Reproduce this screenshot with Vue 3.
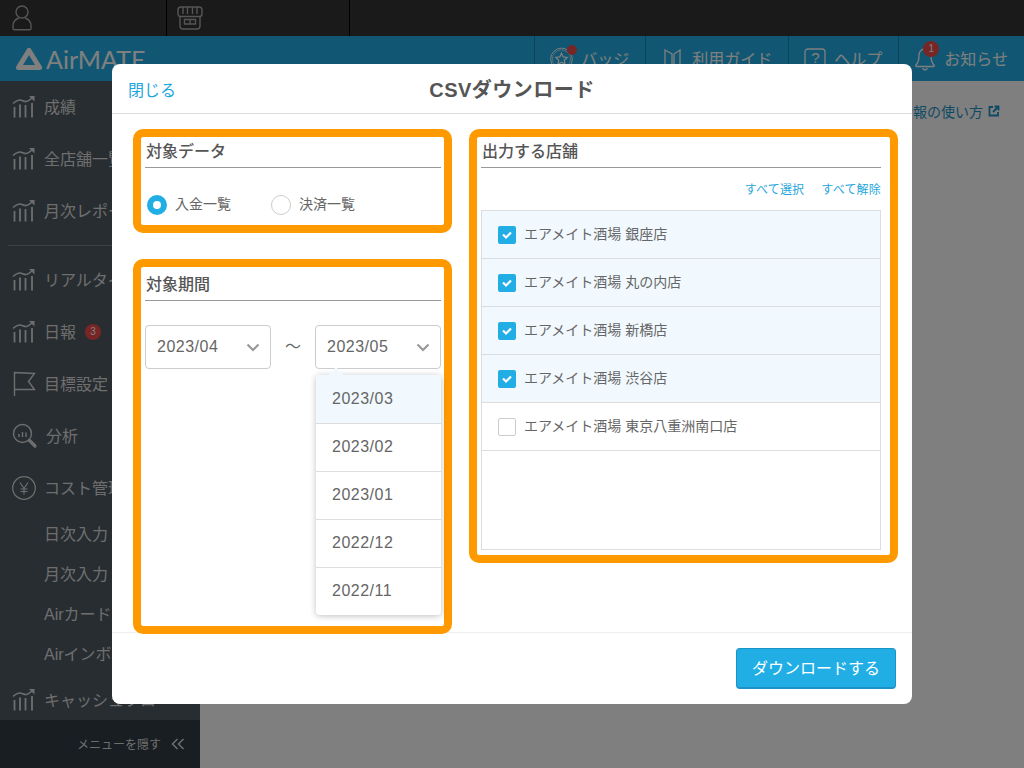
<script setup>
const navItems = [
  { label: '成績', icon: 'chart' },
  { label: '全店舗一覧', icon: 'chart' },
  { label: '月次レポート', icon: 'chart', divider: true },
  { label: 'リアルタイム', icon: 'chart' },
  { label: '日報', icon: 'chart', badge: 3 },
  { label: '目標設定', icon: 'flag' },
  { label: '分析', icon: 'search' },
  { label: 'コスト管理', icon: 'yen', children: ['日次入力', '月次入力', 'Airカード', 'Airインボイス'] },
  { label: 'キャッシュフロー', icon: 'chart' },
]

const months = ['2023/03', '2023/02', '2023/01', '2022/12', '2022/11']

const stores = [
  { name: 'エアメイト酒場 銀座店', checked: true },
  { name: 'エアメイト酒場 丸の内店', checked: true },
  { name: 'エアメイト酒場 新橋店', checked: true },
  { name: 'エアメイト酒場 渋谷店', checked: true },
  { name: 'エアメイト酒場 東京八重洲南口店', checked: false },
]
</script>

<template>
  <div class="page">
    <div class="topbar">
      <div class="top-cell first">
        <svg width="20" height="26" viewBox="0 0 20 26" fill="none" stroke="#aaa" stroke-width="1.400">
          <circle cx="10" cy="7" r="6" />
          <path d="M7 13c-3 1-6 4-6 8v2.500c0 .8.6 1.300 1.300 1.300h15.400c.7 0 1.300-.5 1.300-1.300V21c0-4-3-7-6-8" />
        </svg>
      </div>
      <div class="top-cell second">
        <svg width="26" height="24" viewBox="0 0 26 24" fill="none" stroke="#aaa" stroke-width="1.400">
          <path d="M4 1h18c2 0 3 1.500 3 3v4c0 1.600-1 2.500-2.400 2.500H3.400C2 10.500 1 9.600 1 8V4c0-1.500 1-3 3-3z" />
          <path d="M6 1v7M10.500 1v7M15.500 1v7M20 1v7" />
          <path d="M3 10.500V20c0 1.600 1 3 3 3h14c2 0 3-1.400 3-3v-9.500" />
          <path d="M7.500 13.500h11v4.500h-11zM13 13.500V18" />
        </svg>
      </div>
    </div>

    <header class="header">
      <div class="logo">
        <svg width="28" height="26" viewBox="0 0 28 26" fill="none" stroke="#fff" stroke-width="5" stroke-linejoin="round">
          <path d="M14 4.500L24.500 21.500H3.500z" />
        </svg>
        <span>AirMATE</span>
      </div>
      <nav class="header-nav">
        <a class="header-item">
          <span class="header-icon">
            <svg width="24" height="24" viewBox="0 0 24 24" fill="none" stroke="#fff" stroke-width="1">
              <circle cx="12" cy="12" r="11.300" />
              <circle cx="12" cy="12" r="9.500" stroke-width=".6" />
              <path d="M12 6l1.800 3.900 4.200.5-3.100 2.900.8 4.200-3.700-2.100-3.700 2.100.8-4.200L6 10.400l4.200-.5z" stroke-width="1.300" />
            </svg>
            <i class="dot" />
          </span>
          <span class="header-text">バッジ</span>
        </a>
        <a class="header-item">
          <span class="header-icon">
            <svg width="23" height="22" viewBox="0 0 23 22" fill="none" stroke="#fff" stroke-width="1.300">
              <path d="M4 2l7 4v15l-7-3.500zM19 2l-6 4v15l6-3.500z" />
            </svg>
          </span>
          <span class="header-text">利用ガイド</span>
        </a>
        <a class="header-item">
          <span class="header-icon">
            <svg width="22" height="22" viewBox="0 0 22 22" fill="none" stroke="#fff" stroke-width="1.300">
              <rect x="1" y="1" width="20" height="18" rx="3" />
            </svg>
            <b class="help-mark">?</b>
          </span>
          <span class="header-text">ヘルプ</span>
        </a>
        <a class="header-item">
          <span class="header-icon">
            <svg width="22" height="24" viewBox="0 0 22 24" fill="none" stroke="#fff" stroke-width="1.300">
              <path d="M11 2c-4 0-6 3-6 6.500 0 5-1 7.500-3 9.500-.6.700-.2 1.500.6 1.500h16.800c.8 0 1.200-.8.600-1.500-2-2-3-4.500-3-9.500C17 5 15 2 11 2z" />
              <path d="M8.500 21c.6 1.300 1.500 2 2.500 2s1.900-.7 2.500-2" />
            </svg>
            <i class="count">1</i>
          </span>
          <span class="header-text">お知らせ</span>
        </a>
      </nav>
    </header>

    <div class="content">
      <aside class="sidebar">
        <template v-for="item in navItems" :key="item.label">
          <a class="nav-item">
            <svg v-if="item.icon === 'chart'" width="24" height="24" viewBox="0 0 24 24" fill="none" stroke="#ddd" stroke-width="1.500">
              <path d="M2.500 12v10.500M8 9.500v13M13.500 10v12.500M20 8v14.500" stroke-width="1.800" />
              <path d="M1 8.500C4 6 6 5 8 5s4 2 6.500 1.500S18 4.500 21 2" />
              <path d="M17 1h5.500v5.500z" fill="#ddd" stroke="none" />
            </svg>
            <svg v-else-if="item.icon === 'flag'" width="24" height="26" viewBox="0 0 24 26" fill="none" stroke="#ddd" stroke-width="1.400">
              <path d="M2.500 25V1.500l20 1-6 8 6 8H2.500" />
            </svg>
            <svg v-else-if="item.icon === 'search'" width="26" height="26" viewBox="0 0 26 26" fill="none" stroke="#ddd" stroke-width="1.400">
              <circle cx="10.500" cy="10.500" r="9" />
              <path d="M7 14v-3M10.500 14V9M14 14v-4.500" />
              <path d="M17.500 17.500l5.500 5.500" stroke-width="3.200" stroke-linecap="round" />
            </svg>
            <svg v-else width="24" height="24" viewBox="0 0 24 24" fill="none" stroke="#ddd" stroke-width="1.200">
              <circle cx="12" cy="12" r="11.300" />
              <path d="M8 6.500l4 6 4-6M12 12.500v6M8.500 13h7M8.500 15.500h7" />
            </svg>
            <span class="nav-text">{{ item.label }}</span>
            <i v-if="item.badge" class="nav-badge">{{ item.badge }}</i>
          </a>
          <hr v-if="item.divider" class="nav-divider">
          <div v-if="item.children" class="sub-nav">
            <a v-for="child in item.children" :key="child" class="sub-item">{{ child }}</a>
          </div>
        </template>
        <div class="hide-menu">
          <span>メニューを隠す</span>
          <svg width="14" height="12" viewBox="0 0 14 12" fill="none" stroke="#ddd" stroke-width="1.500">
            <path d="M6.500 1L1.500 6l5 5M12.500 1l-5 5 5 5" />
          </svg>
        </div>
      </aside>
      <main class="main">
        <a class="help-link">
          成績情報の使い方
          <svg width="12" height="12" viewBox="0 0 12 12" fill="none" stroke="#1d94c8" stroke-width="1.800">
            <path d="M5 2H1.500v8.500H10V7M6.500 1.500h4v4M10.500 1.500L5 7" />
          </svg>
        </a>
      </main>
    </div>

    <div class="overlay">
      <div class="modal">
        <div class="modal-head">
          <a class="close">閉じる</a>
          <h1>CSVダウンロード</h1>
        </div>

        <div class="modal-body">
          <div class="left-col">
            <section class="mark mark-data">
              <h2>対象データ</h2>
              <div class="radios">
                <label class="radio">
                  <i class="radio-dot on" />
                  <span>入金一覧</span>
                </label>
                <label class="radio">
                  <i class="radio-dot" />
                  <span>決済一覧</span>
                </label>
              </div>
            </section>

            <section class="mark mark-period">
              <h2>対象期間</h2>
              <div class="period">
                <div class="select">
                  2023/04
                  <svg class="chevron" width="14" height="9" viewBox="0 0 14 9" fill="none" stroke="#999" stroke-width="2.200">
                    <path d="M1.500 1.500L7 7l5.500-5.500" />
                  </svg>
                </div>
                <span class="tilde">〜</span>
                <div class="select">
                  2023/05
                  <svg class="chevron" width="14" height="9" viewBox="0 0 14 9" fill="none" stroke="#999" stroke-width="2.200">
                    <path d="M1.500 1.500L7 7l5.500-5.500" />
                  </svg>
                  <div class="menu">
                    <i class="menu-arrow" />
                    <div v-for="month in months" :key="month" class="menu-item">
                      {{ month }}
                    </div>
                  </div>
                </div>
              </div>
            </section>
          </div>

          <section class="mark mark-stores">
            <h2>出力する店舗</h2>
            <div class="bulk">
              <a>すべて選択</a>
              <a>すべて解除</a>
            </div>
            <ul class="store-list">
              <li v-for="store in stores" :key="store.name" :class="{ checked: store.checked }">
                <i class="box">
                  <svg v-if="store.checked" width="12" height="10" viewBox="0 0 12 10" fill="none" stroke="#fff" stroke-width="2.200">
                    <path d="M2 4.500l3 3 5-5" />
                  </svg>
                </i>
                <span class="store-name">{{ store.name }}</span>
              </li>
            </ul>
          </section>
        </div>

        <div class="modal-foot">
          <button type="button">ダウンロードする</button>
        </div>
      </div>
    </div>
  </div>
</template>

<style>
html, body { margin: 0; }
</style>

<style scoped>
.page {
  position: relative;
  display: flex;
  flex-direction: column;
  width: 1024px;
  height: 768px;
  overflow: hidden;
  font-family: "Liberation Sans", "Noto Sans CJK JP", sans-serif;
  color: #666;
}

.topbar {
  flex: 0 0 36px;
  display: flex;
  background: #343434;
}
.top-cell {
  display: flex;
  align-items: center;
  border-right: 1px solid #000;
  box-sizing: border-box;
}
.top-cell.first { width: 167px; padding-left: 12px; }
.top-cell.second { width: 183px; padding-left: 10px; }

.header {
  flex: 0 0 45px;
  display: flex;
  justify-content: space-between;
  background: #23afe6;
  color: #fff;
}
.logo {
  display: flex;
  align-items: center;
  gap: 3px;
  padding-left: 15px;
  font-family: Lato, sans-serif;
  font-size: 25px;
  font-weight: 400;
}
.header-nav { display: flex; }
.header-item {
  display: flex;
  align-items: center;
  gap: 8px;
  padding: 0 16px 0 15px;
  border-left: 1px solid #1b86b4;
  font-size: 16px;
}
.header-item:nth-child(n+3) .header-icon { width: 22px; }
.header-text { padding-bottom: 2px; }
.header-icon {
  position: relative;
  display: flex;
  justify-content: center;
  width: 23px;
}
.dot {
  position: absolute;
  top: -2px;
  right: -4px;
  width: 10px;
  height: 10px;
  border-radius: 50%;
  background: #f04a4a;
}
.help-mark {
  position: absolute;
  top: 0;
  left: 0;
  width: 100%;
  text-align: center;
  font-size: 15px;
  font-weight: 400;
  line-height: 20px;
}
.count {
  position: absolute;
  top: -6px;
  right: -3px;
  width: 16px;
  height: 16px;
  border-radius: 50%;
  background: #f04a4a;
  font-size: 10px;
  font-style: normal;
  line-height: 16px;
  text-align: center;
}

.content {
  flex: 1;
  display: flex;
  min-height: 0;
}
.sidebar {
  position: relative;
  flex: 0 0 200px;
  overflow: hidden;
  background: #505a62;
  color: #ddd;
  font-size: 16px;
}
.nav-item {
  display: flex;
  align-items: center;
  gap: 8px;
  height: 52px;
  padding-left: 12px;
  white-space: nowrap;
}
.nav-text { padding-bottom: 2px; }
.nav-badge {
  width: 16px;
  height: 16px;
  margin: 0 0 1px 1px;
  border-radius: 50%;
  background: #f04a4a;
  color: #fff;
  font-size: 10px;
  font-style: normal;
  line-height: 16px;
  text-align: center;
}
.nav-divider {
  height: 1px;
  margin: 8px 8px 8px;
  border: 0;
  background: #7c858c;
}
.sub-item {
  display: flex;
  align-items: center;
  height: 40px;
  padding: 0 0 2px 44px;
  box-sizing: border-box;
}
.hide-menu {
  position: absolute;
  left: 0;
  right: 0;
  bottom: 0;
  display: flex;
  align-items: center;
  justify-content: flex-end;
  gap: 10px;
  height: 48px;
  padding-right: 15px;
  background: #323c44;
  font-size: 12px;
}
.hide-menu span { padding-bottom: 2px; }

.main {
  flex: 1;
  display: flex;
  justify-content: flex-end;
  padding: 21px 24px 0 0;
  background: #fff;
}
.help-link {
  display: flex;
  align-items: center;
  gap: 5px;
  height: 18px;
  color: #1d94c8;
  font-size: 14px;
}

.overlay {
  position: absolute;
  inset: 0;
  display: flex;
  align-items: center;
  justify-content: center;
  background: rgba(0, 0, 0, 0.5);
}
.modal {
  display: flex;
  flex-direction: column;
  width: 800px;
  height: 640px;
  border-radius: 8px;
  background: #fff;
}
.modal-head {
  flex: 0 0 50px;
  box-sizing: border-box;
  display: grid;
  grid-template-columns: 1fr auto 1fr;
  align-items: center;
  padding: 0 16px;
  border-bottom: 1px solid #ddd;
}
.close {
  color: #1fa6dc;
  font-size: 16px;
}
.modal-head h1 {
  margin: 0;
  color: #555;
  font-size: 20px;
  font-weight: 700;
  letter-spacing: 0.5px;
}
.modal-body {
  position: relative;
  flex: 1;
  min-height: 0;
  display: flex;
  align-items: flex-start;
  gap: 17px;
  padding: 15px 0 0 21px;
}
.left-col {
  display: flex;
  flex-direction: column;
  gap: 26px;
  width: 319px;
}
.mark {
  box-sizing: border-box;
  padding: 0 3px 0 4px;
  border: 8px solid #f90;
  border-radius: 10px;
}
.mark h2 {
  box-sizing: border-box;
  height: 31px;
  margin: 0;
  padding-left: 1px;
  border-bottom: 1px solid #999;
  color: #555;
  font-size: 16px;
  font-weight: 500;
  line-height: 30px;
}
.mark-data { height: 104px; }
.radios {
  display: flex;
  gap: 40px;
  margin-top: 25px;
  padding-left: 2px;
}
.radio {
  display: flex;
  align-items: center;
  gap: 8px;
  font-size: 14px;
}
.radio span { padding-bottom: 4px; }
.radio-dot {
  box-sizing: border-box;
  width: 20px;
  height: 20px;
  border: 1px solid #ccc;
  border-radius: 50%;
  background: #fff;
}
.radio-dot.on {
  border: 6px solid #20aee5;
}

.mark-period { height: 375px; padding-top: 3px; }
.period {
  display: flex;
  align-items: center;
  margin-top: 24px;
}
.select {
  position: relative;
  box-sizing: border-box;
  display: flex;
  align-items: center;
  justify-content: space-between;
  width: 126px;
  height: 44px;
  padding: 0 10px 0 11px;
  border: 1px solid #ccc;
  border-radius: 4px;
  font-size: 16px;
  letter-spacing: 0.5px;
}
.tilde {
  flex: 0 0 44px;
  padding-bottom: 4px;
  text-align: center;
  font-size: 16px;
}
.menu {
  position: absolute;
  top: 49px;
  left: 0;
  width: 125px;
  border-radius: 4px;
  background: #fff;
  box-shadow: 0 1px 6px rgba(0, 0, 0, 0.25);
}
.menu-arrow {
  position: absolute;
  top: -8px;
  left: 13px;
  width: 0;
  height: 0;
  border: 7px solid transparent;
  border-top: 0;
  border-bottom: 8px solid #f1f9fe;
}
.menu-item {
  box-sizing: border-box;
  height: 48px;
  padding-left: 16px;
  border-top: 1px solid #ddd;
  line-height: 45px;
}
.menu-item:first-of-type {
  border-top: 0;
  border-radius: 4px 4px 0 0;
  background: #f1f9fe;
  line-height: 47px;
}

.mark-stores {
  width: 429px;
  padding: 0 9px 5px 4px;
}
.bulk {
  display: flex;
  align-items: center;
  justify-content: flex-end;
  gap: 17px;
  height: 42px;
  padding-bottom: 2px;
  box-sizing: border-box;
  color: #1fa6dc;
  font-size: 12px;
  letter-spacing: 0.2px;
}
.store-list {
  box-sizing: border-box;
  height: 340px;
  margin: 0;
  padding: 0;
  border: 1px solid #ddd;
  list-style: none;
}
.store-list li {
  box-sizing: border-box;
  display: flex;
  align-items: center;
  gap: 8px;
  height: 48px;
  padding-left: 16px;
  border-bottom: 1px solid #ddd;
  font-size: 14px;
}
.store-name { padding-bottom: 3px; }
.store-list li.checked { background: #f1f9fe; }
.box {
  box-sizing: border-box;
  display: flex;
  align-items: center;
  justify-content: center;
  width: 18px;
  height: 18px;
  border: 1px solid #ccc;
  border-radius: 2px;
  background: #fff;
}
.checked .box {
  border: 0;
  background: #20aee5;
}

.modal-foot {
  flex: 0 0 72px;
  box-sizing: border-box;
  display: flex;
  align-items: flex-start;
  justify-content: flex-end;
  padding: 15px 16px 0 0;
  border-top: 1px solid #eee;
}
.modal-foot button {
  width: 160px;
  height: 41px;
  padding: 0 0 2px;
  border: 1px solid #1a93c6;
  border-bottom-width: 2px;
  border-radius: 4px;
  background: #20aee5;
  color: #fff;
  font-family: inherit;
  font-size: 16px;
}
</style>
